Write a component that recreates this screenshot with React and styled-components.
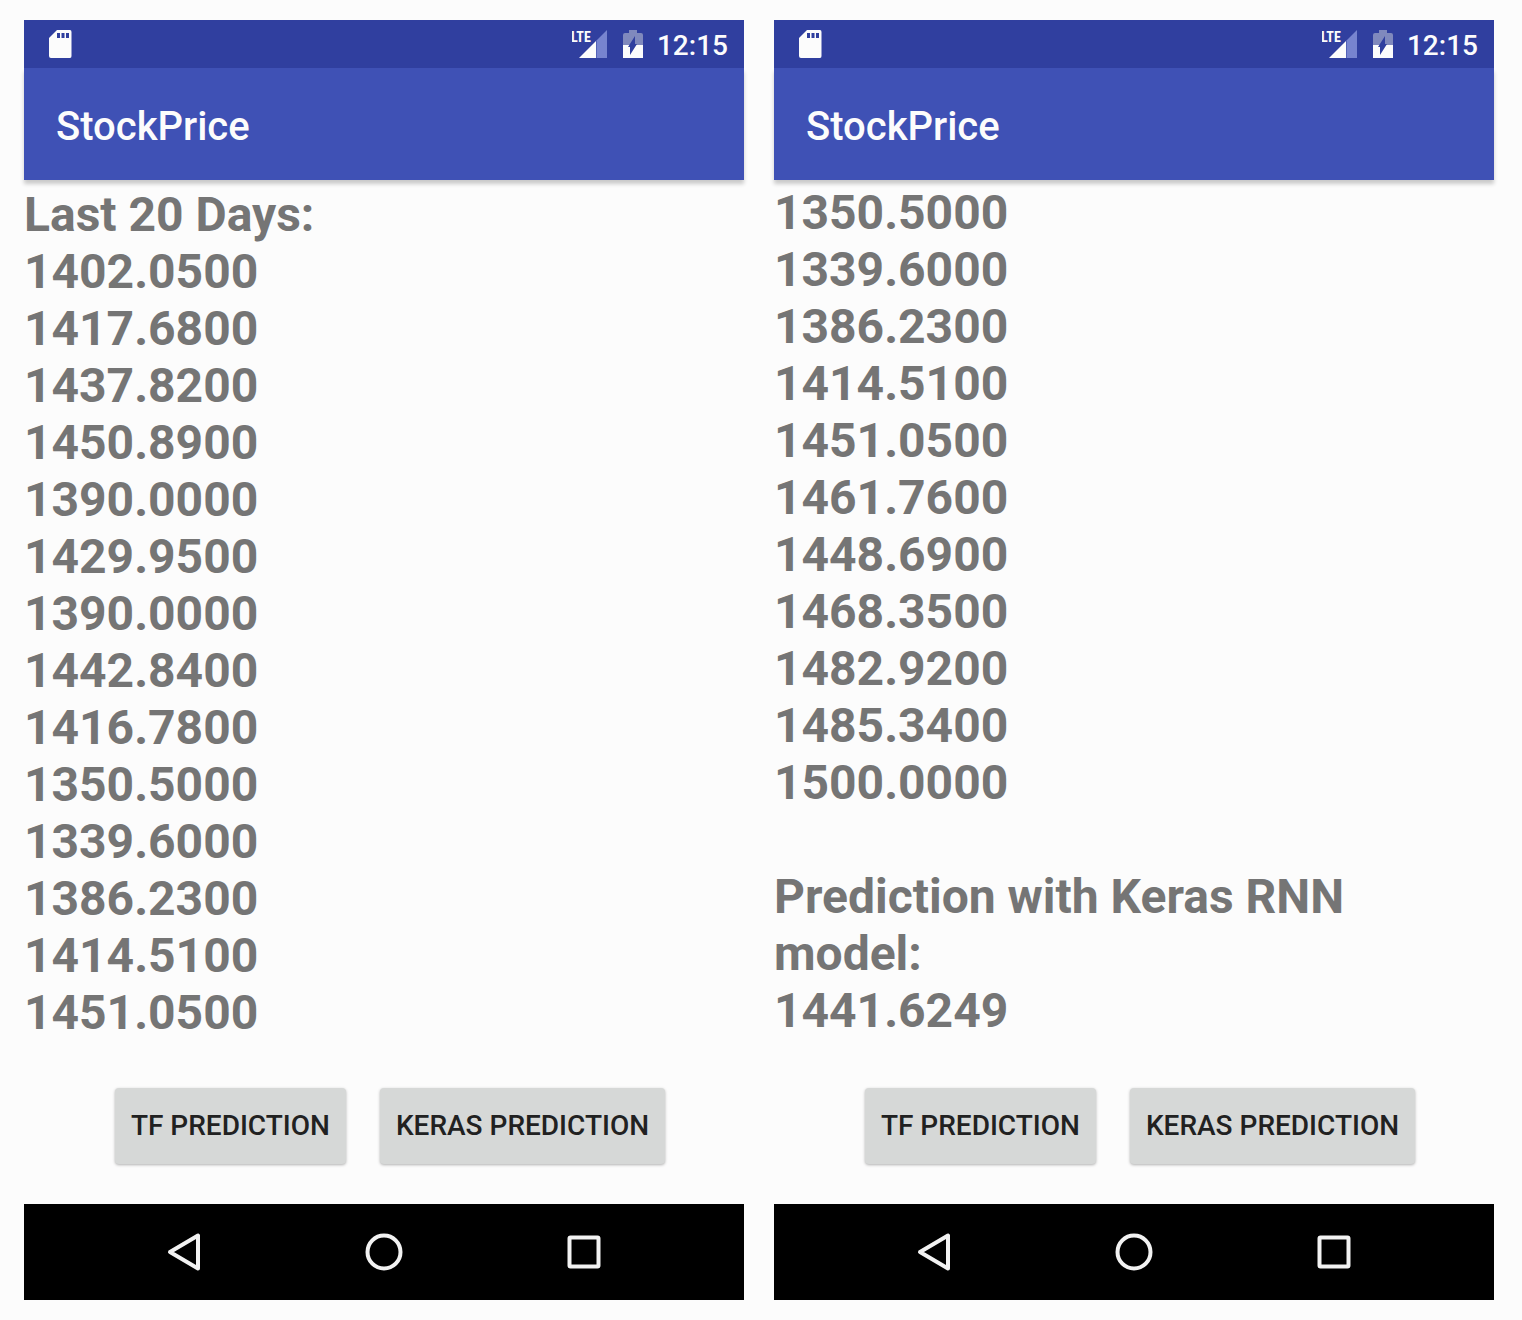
import React from "react";
import styled, { createGlobalStyle } from "styled-components";

const GlobalStyle = createGlobalStyle`
  * { box-sizing: border-box; }
  body {
    margin: 0;
    background: #fcfcfc;
    font-family: Roboto, "Liberation Sans", sans-serif;
  }
`;

const Page = styled.main`
  display: grid;
  grid-template-columns: 1fr 1fr;
  gap: 30px;
  padding: 20px 28px 20px 24px;
`;

const Phone = styled.section`
  display: flex;
  flex-direction: column;
  min-width: 0;
`;

const StatusBar = styled.div`
  display: flex;
  align-items: center;
  justify-content: space-between;
  height: 48px;
  padding: 0 16px 0 24px;
  background: #303f9f;
  color: #fcfcfc;
`;

const StatusIcons = styled.div`
  display: flex;
  align-items: center;
`;

const Signal = styled.svg`
  display: block;
  margin-right: 16px;
`;

const Battery = styled.svg`
  display: block;
  margin-right: 14px;
`;

const NetworkLabel = styled.text`
  font: 700 14px "Liberation Sans Narrow", "Roboto Condensed", Roboto, sans-serif;
`;

const Clock = styled.time`
  font-size: 28px;
  font-weight: 500;
  line-height: 44px;
  padding-top: 4px;
`;

const AppBar = styled.header`
  display: flex;
  align-items: center;
  height: 112px;
  padding: 6px 32px 0;
  background: #3f51b5;
  color: #fcfcfc;
  box-shadow: 0 4px 4px rgba(0, 0, 0, 0.2);
`;

const Title = styled.h1`
  margin: 0;
  font-size: 40px;
  font-weight: 500;
  line-height: 48px;
`;

const Output = styled.div`
  padding-top: ${({ $scrolled }) => ($scrolled ? 4 : 6)}px;
  height: 868px;
  overflow: hidden;
  color: #757575;
  font-size: 48px;
  font-weight: 700;
  line-height: 57px;
`;

const Line = styled.p`
  margin: 0;
  min-height: 57px;
`;

const Actions = styled.div`
  display: flex;
  justify-content: center;
  gap: 34px;
  padding: 40px 0;
  margin-left: 12px;
`;

const ActionButton = styled.button`
  height: 76px;
  padding: 0 16px;
  border: 0;
  border-radius: 4px;
  background: #d6d8d7;
  color: #212121;
  font: 500 28px/32px Roboto, "Liberation Sans", sans-serif;
  text-transform: uppercase;
  white-space: nowrap;
  box-shadow: 0 1px 3px rgba(0, 0, 0, 0.3);
`;

const NavBar = styled.nav`
  display: flex;
  align-items: center;
  justify-content: center;
  gap: 152px;
  height: 96px;
  background: #000;
`;

const NavButton = styled.button`
  width: 48px;
  height: 48px;
  padding: 0;
  border: 0;
  background: none;
  color: #f2f2f2;

  svg {
    display: block;
  }
`;

const NavIcon = ({ children }) => (
  <svg width="48" height="48" viewBox="0 0 48 48" fill="none" stroke="currentColor" strokeWidth="4" strokeLinejoin="round" aria-hidden="true">
    {children}
  </svg>
);

const SdCardIcon = () => (
  <svg width="24" height="28" viewBox="0 0 24 28" aria-hidden="true">
    <path fill="#fcfcfc" fillRule="evenodd" d="M9 0H22Q23.5 0 23.5 2V26Q23.5 28 22 28H3Q1 28 1 26V8ZM9 3V8H12V3ZM13.500 3V8H16.500V3ZM18 3V8H21V3Z" />
  </svg>
);

const SignalIcon = () => (
  <Signal width="35" height="28" viewBox="0 0 35 28" role="img" aria-label="LTE signal">
    <path fill="#7784cf" d="M24.5 10.500 35 0V28H24.500Z" />
    <path fill="#fcfcfc" d="M7 28 24 11V28Z" />
    <NetworkLabel x="-1" y="12" fill="#fcfcfc">LTE</NetworkLabel>
  </Signal>
);

const BatteryIcon = () => (
  <Battery width="20" height="28" viewBox="0 0 20 28" role="img" aria-label="Charging">
    <path fill="#8089bd" d="M6 0H14V3H18Q20 3 20 5V15H0V5Q0 3 2 3H6Z" />
    <path fill="#fcfcfc" d="M0 15H20V28H0Z" />
    <path fill="#303f9f" d="M12 6V14H14L7 25V17H5Z" />
  </Battery>
);

const days = [
  "1402.0500", "1417.6800", "1437.8200", "1450.8900", "1390.0000",
  "1429.9500", "1390.0000", "1442.8400", "1416.7800", "1350.5000",
  "1339.6000", "1386.2300", "1414.5100", "1451.0500", "1461.7600",
  "1448.6900", "1468.3500", "1482.9200", "1485.3400", "1500.0000",
];

const initialLines = ["Last 20 Days:", ...days.slice(0, 14)];
const predictionLines = [...days.slice(9), "", "Prediction with Keras RNN model:", "1441.6249"];

function PhoneScreen({ lines, scrolled }) {
  return (
    <Phone>
      <StatusBar>
        <SdCardIcon />
        <StatusIcons>
          <SignalIcon />
          <BatteryIcon />
          <Clock>12:15</Clock>
        </StatusIcons>
      </StatusBar>
      <AppBar>
        <Title>StockPrice</Title>
      </AppBar>
      <Output $scrolled={scrolled}>
        {lines.map((line, i) => (
          <Line key={i}>{line}</Line>
        ))}
      </Output>
      <Actions>
        <ActionButton type="button">TF Prediction</ActionButton>
        <ActionButton type="button">Keras Prediction</ActionButton>
      </Actions>
      <NavBar aria-label="System navigation">
        <NavButton type="button" aria-label="Back">
          <NavIcon><path d="M38 7.500V40.500L10 24Z" /></NavIcon>
        </NavButton>
        <NavButton type="button" aria-label="Home">
          <NavIcon><circle cx="24" cy="24" r="16.500" /></NavIcon>
        </NavButton>
        <NavButton type="button" aria-label="Recent apps">
          <NavIcon><rect x="9.500" y="9.500" width="29" height="29" rx="1" /></NavIcon>
        </NavButton>
      </NavBar>
    </Phone>
  );
}

export default function App() {
  return (
    <>
      <GlobalStyle />
      <Page>
        <PhoneScreen lines={initialLines} />
        <PhoneScreen lines={predictionLines} scrolled />
      </Page>
    </>
  );
}
